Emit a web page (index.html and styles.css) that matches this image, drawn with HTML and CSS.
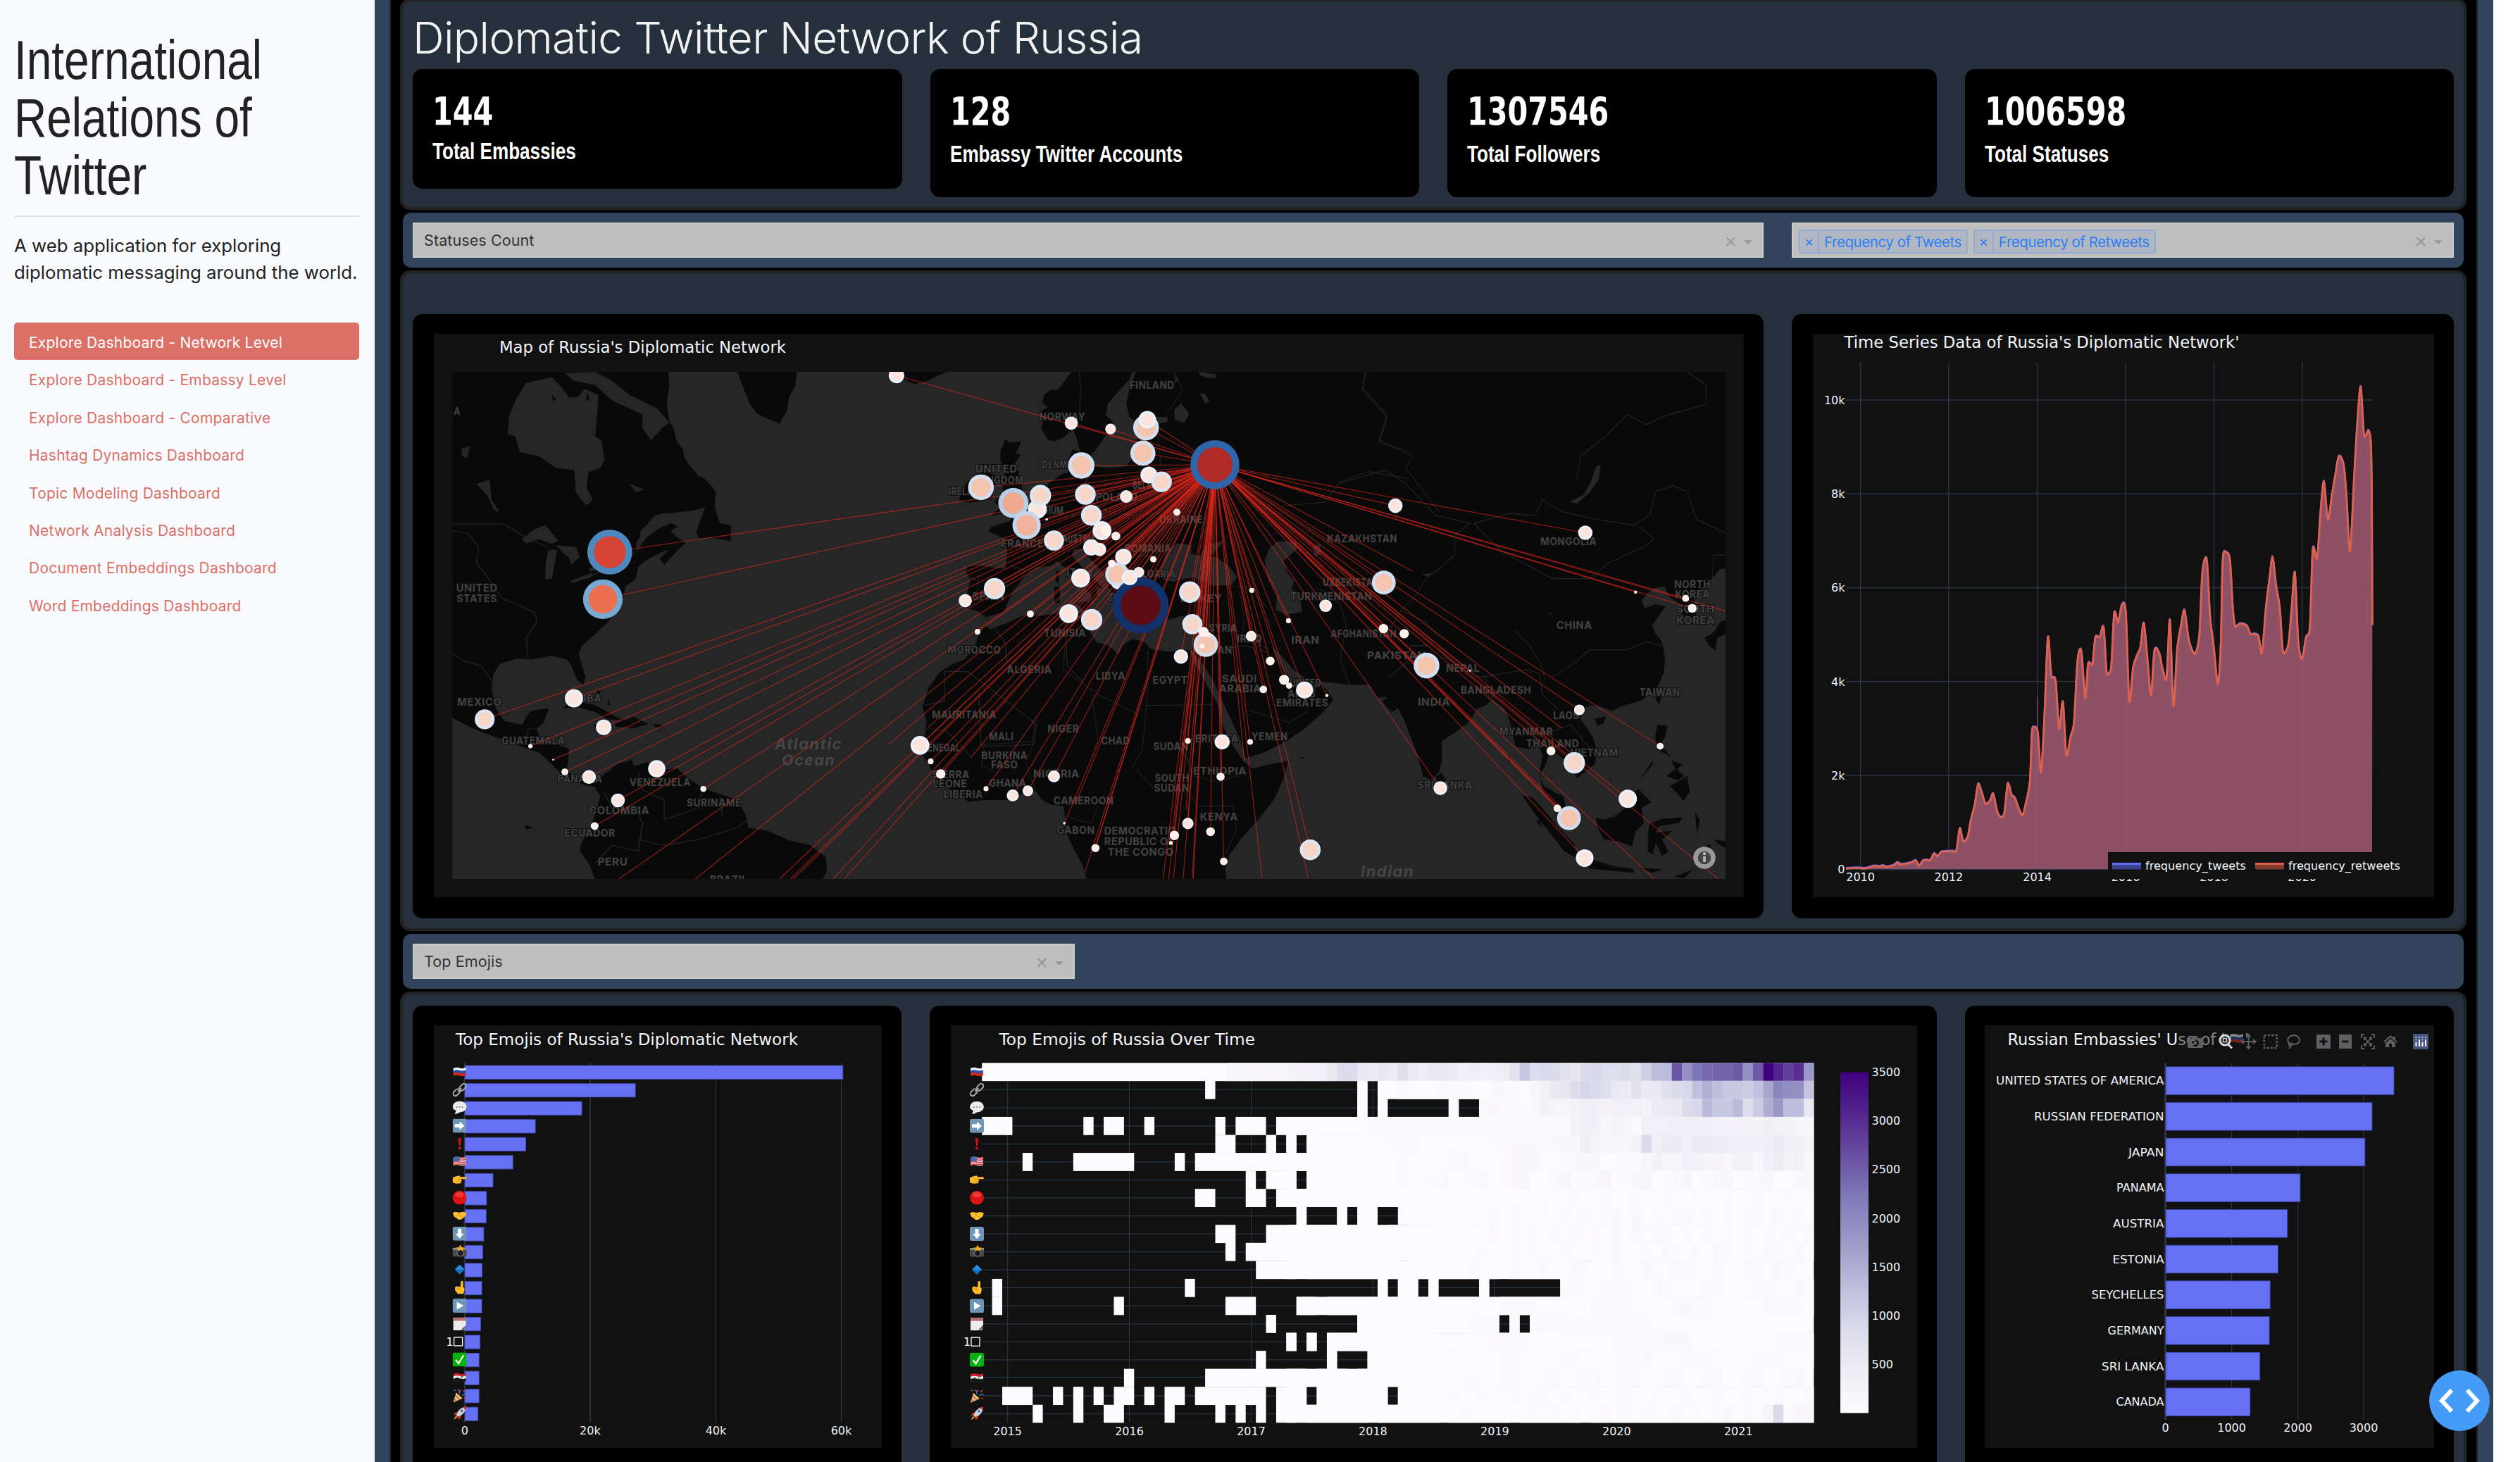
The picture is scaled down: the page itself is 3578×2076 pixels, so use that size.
FILE: index.html
```html
<!DOCTYPE html>
<html lang="en">
<head>
<meta charset="utf-8">
<title>International Relations of Twitter</title>
<link rel="stylesheet" href="styles.css">
</head>
<body>
<aside class="sidebar">
  <h2 class="brand">International<br>Relations of<br>Twitter</h2>
  <hr class="rule">
  <p class="lead">A web application for exploring<br>diplomatic messaging around the world.</p>
  <nav class="nav">
    <a class="nav-link active">Explore Dashboard - Network Level</a>
    <a class="nav-link">Explore Dashboard - Embassy Level</a>
    <a class="nav-link">Explore Dashboard - Comparative</a>
    <a class="nav-link">Hashtag Dynamics Dashboard</a>
    <a class="nav-link">Topic Modeling Dashboard</a>
    <a class="nav-link">Network Analysis Dashboard</a>
    <a class="nav-link">Document Embeddings Dashboard</a>
    <a class="nav-link">Word Embeddings Dashboard</a>
  </nav>
</aside>
<main class="main">
  <div class="board">
    <section class="panel panel-stats">
      <h1 class="title">Diplomatic Twitter Network of Russia</h1>
      <div class="stats">
        <div class="card stat stat-short"><b class="num">144</b><span class="label">Total Embassies</span></div>
        <div class="card stat"><b class="num">128</b><span class="label">Embassy Twitter Accounts</span></div>
        <div class="card stat"><b class="num">1307546</b><span class="label">Total Followers</span></div>
        <div class="card stat"><b class="num">1006598</b><span class="label">Total Statuses</span></div>
      </div>
    </section>

    <section class="filters">
      <div class="select wide"><span class="value">Statuses Count</span><span class="clear">×</span><i class="arrow"></i></div>
      <div class="select"><span class="tag"><i>×</i><span>Frequency of Tweets</span></span><span class="tag"><i>×</i><span>Frequency of Retweets</span></span><span class="clear">×</span><i class="arrow"></i></div>
    </section>

    <section class="panel panel-map">
      <div class="card chart wide"><svg id="map" viewBox="616 474 1860 800" width="1860" height="800"></svg></div>
      <div class="card chart"><svg id="series" viewBox="2574 474 882 800" width="882" height="800"></svg></div>
    </section>

    <section class="filters">
      <div class="select"><span class="value">Top Emojis</span><span class="clear">×</span><i class="arrow"></i></div>
    </section>

    <section class="panel panel-emoji">
      <div class="card chart"><svg id="emojis" viewBox="616 1456 636 600" width="636" height="600"></svg></div>
      <div class="card chart mid"><svg id="heat" viewBox="1350 1456 1372 600" width="1372" height="600"></svg></div>
      <div class="card chart third"><svg id="use" viewBox="2818 1456 638 600" width="638" height="600"></svg></div>
    </section>
  </div>
</main>
<button class="debug" aria-label="Debug"><svg viewBox="0 0 86 86" width="86" height="86"><path d="M32 28L18 43L32 58M54 28L68 43L54 58" fill="none" stroke="#fff" stroke-width="6"/></svg></button>

<svg width="0" height="0" class="defs">
  <defs>
    <symbol id="e-ru" viewBox="0 0 20 20"><path d="M1 5Q6 3 10 4.500T19 4V8Q14 9 10 8.500T1 9Z" fill="#f4f4f4"/><path d="M1 8.500Q6 6.500 10 8T19 7.500V12Q14 13 10 12T1 12.500Z" fill="#2455b5"/><path d="M1 12Q6 10 10 11.500T19 11.500V15Q14 17 10 15.500T1 16Z" fill="#d8281e"/></symbol>
    <symbol id="e-link" viewBox="0 0 20 20"><g fill="none" stroke="#a5a8ab" stroke-width="2"><rect x="9" y="3" width="11" height="6.500" rx="3.200" transform="rotate(-45 14.500 6.300)"/><rect x="0" y="10.500" width="11" height="6.500" rx="3.200" transform="rotate(-45 5.500 13.700)"/><path d="M7.500 12.500L12.500 7.500"/></g></symbol>
    <symbol id="e-talk" viewBox="0 0 20 20"><path d="M3 19L5 14Q0 12 0 8.500Q1 1 10 .800Q19 1 20 8.500Q19 16 10 16.500Q7 18.500 3 19Z" fill="#ececec"/><g fill="#777"><circle cx="6" cy="9" r="1"/><circle cx="10" cy="9" r="1"/><circle cx="14" cy="9" r="1"/></g></symbol>
    <symbol id="e-right" viewBox="0 0 20 20"><rect width="20" height="20" rx="3" fill="#6f95b8"/><path d="M3 7.500H10V4L17 10L10 16V12.500H3Z" fill="#fff"/></symbol>
    <symbol id="e-bang" viewBox="0 0 20 20"><path d="M8 2H12L11 13H9Z" fill="#e01010"/><circle cx="10" cy="16.300" r="1.900" fill="#e01010"/></symbol>
    <symbol id="e-us" viewBox="0 0 20 20"><path d="M1 4Q6 2 10 3.500T19 3V15Q14 16.500 10 15T1 15.500Z" fill="#e8c8ca"/><path d="M1 7.500Q6 5.500 10 7T19 6.500M1 11Q6 9 10 10.500T19 10M1 14.300Q6 12.500 10 13.500T19 13.500M10 4.500Q14 5 19 4" fill="none" stroke="#d2444c" stroke-width="1.500"/><path d="M1 4Q6 2 10 3.500V9.500Q6 8.500 1 10Z" fill="#3f6cb0"/></symbol>
    <symbol id="e-point" viewBox="0 0 20 20"><path d="M0 7L5 5L10 4L11 6H19Q21 7.500 19 9H12L13 11L11.500 15L5 15.500L0 14Z" fill="#fdbb2c"/><path d="M6 9H11M6 12H12" stroke="#d98d14" fill="none"/></symbol>
    <symbol id="e-red" viewBox="0 0 20 20"><circle cx="10" cy="10" r="9.900" fill="#d81414"/><ellipse cx="10" cy="5.500" rx="6" ry="4" fill="#ee3a34"/></symbol>
    <symbol id="e-shake" viewBox="0 0 20 20"><path d="M0 6L4 4.500L9 5.500L15 4.500L20 6L18 11L12 15.500L8 15.500L2 11Z" fill="#fdc130"/><path d="M9 6L8 9L14 12M5 12L8 14" stroke="#d08a10" fill="none"/></symbol>
    <symbol id="e-down" viewBox="0 0 20 20"><rect width="20" height="20" rx="3" fill="#6f95b8"/><path d="M7.500 3V10H4L10 17L16 10H12.500V3Z" fill="#fff"/></symbol>
    <symbol id="e-cam" viewBox="0 0 20 20"><rect y="4.500" width="20" height="12.500" rx="1" fill="#494949"/><rect y="4.500" width="20" height="3" fill="#8c8c86"/><circle cx="11" cy="12" r="4.500" fill="#1c1c1c" stroke="#888"/><path d="M11 0L13 4L17 4L14 6.500L15 9L11 7.500L7 9L8 6.500L5 4L9 4Z" fill="#f8a61c"/></symbol>
    <symbol id="e-dia" viewBox="0 0 20 20"><path d="M10 3L17 10L10 17L3 10Z" fill="#0f6fc6"/><path d="M10 3L17 10H3Z" fill="#2a8ce2"/></symbol>
    <symbol id="e-up" viewBox="0 0 20 20"><path d="M11.500 1.500Q13.500 -.5 15 1.500V9L17 12L15.500 19H7.500L3.500 14V9.500L6 8L8.500 9L11.500 8.500Z" fill="#fdbb2c"/><path d="M7 10V13M10 11V14" stroke="#d08a10"/></symbol>
    <symbol id="e-play" viewBox="0 0 20 20"><rect width="20" height="20" rx="3" fill="#6f95b8"/><path d="M6 4.500L15.500 10L6 15.500Z" fill="#fff"/></symbol>
    <symbol id="e-cal" viewBox="0 0 20 20"><path d="M1 2H19V12L12 19.500H1Z" fill="#eceaea"/><path d="M19 12L18 19.500H12Q17 17 19 12Z" fill="#8a8a8a"/><path d="M1 2H19V6H1Z" fill="#b9706c"/><path d="M2 1V3M5 1V3M8 1V3M11 1V3M14 1V3M17 1V3" stroke="#999"/></symbol>
    <symbol id="e-ok" viewBox="0 0 20 20"><rect width="20" height="20" rx="3" fill="#05b40a"/><path d="M4.500 10.500L8.500 15.500L15.500 4" fill="none" stroke="#fff" stroke-width="2.300"/></symbol>
    <symbol id="e-sy" viewBox="0 0 20 20"><path d="M1 5Q6 3 10 4.500T19 4V8Q14 9 10 8.500T1 9Z" fill="#c9202c"/><path d="M1 8.500Q6 6.500 10 8T19 7.500V12Q14 13 10 12T1 12.500Z" fill="#eee"/><path d="M1 12Q6 10 10 11.500T19 11.500V15Q14 17 10 15.500T1 16Z" fill="#111" stroke="#444" stroke-width=".5"/><circle cx="7" cy="10" r="1" fill="#187a3c"/><circle cx="13" cy="10.300" r="1" fill="#187a3c"/></symbol>
    <symbol id="e-party" viewBox="0 0 20 20"><path d="M1 20L5 6L14 14Z" fill="#f7c548"/><path d="M4 10L10 16M2.500 15L5.500 18" stroke="#a55ac0" stroke-width="1.600"/><path d="M10 8Q9 4 12 2M13 10Q16 8 20 8M2 2L5 3" stroke="#3f7be0" fill="none" stroke-width="1.400"/><path d="M15 3L17 5M16 13L19 14M8 1L9 4M18 2V3" stroke="#d6403a" stroke-width="1.600"/></symbol>
    <symbol id="e-rocket" viewBox="0 0 20 20"><path d="M19 0Q12 1 7 8L5 12L8 15L12 13Q19 8 19 0Z" fill="#cdd3d9"/><path d="M19 0Q16 0 14.500 1.300L18 5Q19 3 19 0Z" fill="#d2281c"/><circle cx="13" cy="6.500" r="1.800" fill="#2d6ca4"/><path d="M7 8L3 9L2 13L5 12ZM12 13L11.500 17L8 19V15Z" fill="#d2281c"/><path d="M5 13L1 19L7 15.500Z" fill="#fb9a1c"/></symbol>
  </defs>
</svg>
<script src="charts.js"></script>
</body>
</html>
```
FILE: styles.css
```css
* { box-sizing: border-box; }
html, body { margin: 0; height: 2076px; overflow: hidden; }
body { display: flex; background: #fff; font-family: Inter, "Liberation Sans", sans-serif; color: #222; }

.sidebar { width: 532px; flex: none; height: 2076px; padding: 44px 22px 0 20px; background: #f8fafd; }
.brand { margin: 0; font: 400 78px/82px "Liberation Sans", sans-serif; transform: scaleX(.82); transform-origin: 0 0; white-space: nowrap; color: #222; }
.rule { margin: 16px 0 0; border: 0; height: 2px; background: #dfe0e3; }
.lead { margin: 22px 0 0; font-size: 25.800px; line-height: 38px; white-space: nowrap; color: #222; }
.nav { margin-top: 52px; display: flex; flex-direction: column; }
.nav-link { height: 53.400px; padding-left: 21px; line-height: 58px; font-size: 21px; letter-spacing: .22px; color: #dc7067; white-space: nowrap; }
.nav-link.active { background: #dc7067; color: #fff; border-radius: 5px; }

.main { width: 3008px; flex: none; height: 2076px; padding: 0 22px 0 21px; background: #32445c; }
.board { height: 2076px; overflow: hidden; background: #000; border: solid #222; border-width: 0 2px; padding: 0 14px 0 13px; display: flex; flex-direction: column; gap: 4px; }
.panel { flex: none; background: #26303c; border: 4px solid #222; border-radius: 14px; padding: 0 14px; }
.panel-stats { height: 300px; margin-top: -2px; }
.title { margin: 0; padding-top: 8px; height: 96px; font: 300 62px/88px Inter, sans-serif; color: #f2f2f2; white-space: nowrap; letter-spacing: -.6px; }
.stats { display: grid; grid-template-columns: repeat(4, 1fr); gap: 40px; align-items: start; }
.card { background: #000; border-radius: 14px; }
.stat { height: 182px; padding: 26px 28px 0; color: #fff; display: flex; flex-direction: column; align-items: flex-start; }
.stat-short { height: 170px; }
.num { font: 700 56px/68px "DejaVu Sans Condensed", "DejaVu Sans", sans-serif; transform: scaleX(.82); transform-origin: 0 0; }
.label { font: 700 33px/40px "Liberation Sans", sans-serif; transform: scaleX(.79); transform-origin: 0 0; white-space: nowrap; margin-top: 7px; }
.stat-short .label { margin-top: 3px; }

.filters { flex: none; height: 78px; margin: 0 4px; padding: 14px; background: #32445c; border-radius: 12px; display: flex; gap: 40px; }
.select { width: 940px; height: 50px; background: #bebebe; border: 2px solid #ccc; display: flex; align-items: center; padding: 0 14px 0 8px; }
.select.wide { width: 1918px; }
.value { padding-left: 6px; font-size: 21.500px; color: #333; line-height: 44px; margin-top: 0; letter-spacing: .1px; }
.clear { margin-left: auto; padding-top: 4px; font: 30px/40px "Liberation Sans", sans-serif; color: #999; }
.arrow { margin: 5px 0 0 10px; border: solid transparent; border-width: 6px 6px 0; border-top-color: #999; }
.tag { height: 34px; margin: 4px 8px 0 0; display: flex; border: 2px solid #92abd6; border-radius: 3px; background: #b0b7c3; color: #2f7ff2; font-size: 20.500px; line-height: 30px; white-space: nowrap; }
.tag i { font-style: normal; width: 27px; text-align: center; border-right: 2px solid #92abd6; }
.tag span { padding: 1px 7px 0; letter-spacing: -.45px; }

.panel-map { height: 938px; padding-top: 58px; display: flex; gap: 40px; align-items: flex-start; }
.chart { flex: none; width: 940px; height: 858px; padding: 28px 0 0 30px; }
.chart.wide { width: 1918px; }
.chart svg { display: block; background: #111; }
.panel-emoji { height: 800px; padding-top: 16px; display: flex; gap: 40px; }
.panel-emoji .chart { width: 694px; height: 760px; }
.panel-emoji .mid { width: 1430px; }
.panel-emoji .third { padding-left: 28px; }
.chart text { font-family: "DejaVu Sans", Verdana, sans-serif; fill: #f2f5fa; }
.chart .place { font-family: Inter, "Open Sans", sans-serif; font-weight: 700; font-size: 14px; fill: #424242; stroke: #0d0d0d; stroke-width: 2px; paint-order: stroke; letter-spacing: .6px; }
.chart .ocean { font-style: italic; font-size: 22px; fill: #454545; stroke: none; letter-spacing: 1.500px; }
.debug { position: absolute; left: 3449px; top: 1946px; width: 86px; height: 86px; padding: 0; border: 0; border-radius: 50%; background: #459cf8; }
.debug svg { display: block; }
.defs { position: absolute; }
```
FILE: charts.js
```js
const NS = 'http://www.w3.org/2000/svg';
const byId = id => document.getElementById(id);
function el(parent, name, attrs, text) {
  const e = document.createElementNS(NS, name);
  for (const k in attrs) e.setAttribute(k, attrs[k]);
  if (text !== undefined) e.textContent = text;
  parent.appendChild(e);
  return e;
}
function label(p, x, y, str, size = 16, anchor = 'start', len, cls) {
  const a = { x, y, 'font-size': size, 'text-anchor': anchor };
  if (len) { a.textLength = len; a.lengthAdjust = 'spacingAndGlyphs'; }
  if (cls) a.class = cls;
  return el(p, 'text', a, str);
}
function rect(p, x, y, width, height, fill, more = {}) { return el(p, 'rect', { x, y, width, height, fill, ...more }); }
function line(p, x1, y1, x2, y2, stroke = '#283442', w = 1.5) { return el(p, 'line', { x1, y1, x2, y2, stroke, 'stroke-width': w }); }

/* Map tiles: west, centre, east. Each has its own origin and scale. */
const W = [600, 440, 1.6333, 1.7818], C = [1300, 500, 2.24, 2.0632], E = [1900, 440, 2.24, 1.7818];
const at = (t, x, y) => [t[0] + x / t[2], t[1] + y / t[3]];
const MATRIX = t => `translate(${t[0]} ${t[1]}) scale(${1 / t[2]} ${1 / t[3]})`;

function drawMap() {
  const svg = byId('map');
  label(svg, 709, 500.5, "Map of Russia's Diplomatic Network", 22.5, 'start', 407);
  const clip = el(svg, 'clipPath', { id: 'mapclip' });
  rect(clip, 642, 528, 1808, 720, '#000');
  const g = el(svg, 'g', { 'clip-path': 'url(#mapclip)' });
  rect(g, 642, 528, 1808, 720, '#262626');
  const LAND = '#090909', SEA = '#262626';
  const shape = (t, d, fill) => el(g, 'path', { d, fill, transform: MATRIX(t) });
  const border = (t, d) => el(g, 'path', { d, fill: 'none', stroke: '#222', 'stroke-width': 2.4, 'stroke-linejoin': 'round', transform: MATRIX(t) });

  shape(W, 'M69,157L570,157 572,190 566,240 572,280 582,300 590,335 603,350 608,375 620,395 640,420 652,425 665,440 680,460 678,490 640,505 600,512 560,515 535,530 515,555 495,590 497,610 520,575 545,555 575,540 592,548 575,560 590,575 610,590 595,605 560,645 550,630 572,605 545,618 520,632 500,650 495,680 470,700 465,730 440,775 425,795 400,820 370,850 362,870 370,900 378,930 372,950 358,935 345,900 335,885 300,875 250,885 220,882 180,895 165,920 160,960 170,1010 190,1040 230,1050 250,1015 293,1008 280,1045 265,1060 275,1095 310,1100 340,1110 335,1160 350,1185 390,1190 405,1185 410,1210 370,1200 330,1185 300,1150 270,1120 230,1105 180,1085 130,1065 100,1050 69,1032Z', LAND);
  shape(W, 'M215,230L240,185 300,170 325,200 340,222 360,220 375,200 408,215 405,260 400,320 415,330 422,380 412,400 385,410 380,450 395,480 380,495 368,480 355,460 352,405 310,400 270,370 225,360 215,320 197,315 200,270ZM330,160L352,180 400,190 440,230 510,265 510,300 530,330 555,300 572,285 545,250 480,215 440,180 400,157ZM230,580L260,555 285,545 315,585 300,592 270,580 240,590ZM292,607L312,607 300,680 285,682 285,640ZM310,595L355,600 365,625 345,645 338,625 325,615ZM340,687L375,672 395,665 390,677 350,690ZM385,655L420,640 415,655 390,662ZM125,440L155,430 160,480 178,512 165,505 150,470ZM90,350L110,345 103,375 92,370ZM480,440L515,455 495,462ZM505,560L540,520 560,515 530,545 500,600Z', SEA);
  shape(W, 'M635,560L655,500 675,478 680,510 690,540 715,545 715,585 690,580 665,575 640,578ZM730,157L868,157 865,190 850,220 845,255 828,288 800,275 775,262 760,240 745,200ZM1110,157L1215,157 1170,180 1140,188 1115,175ZM325,1008L350,988 400,1000 450,1030 475,1040 430,1036 400,1018 360,1005ZM445,1048L490,1030 525,1048 490,1058 450,1055ZM536,1048L558,1050 552,1058 538,1055ZM397,1048L412,1052 400,1056ZM405,960L412,968 406,975ZM430,985L436,1000 430,1000ZM238,1303L256,1310 240,1315ZM400,1210L410,1185 430,1168 450,1150 485,1138 490,1155 520,1145 545,1165 590,1160 615,1185 650,1210 690,1225 730,1240 750,1280 755,1310 800,1318 850,1342 900,1355 935,1385 938,1420 925,1445 402,1445 385,1400 365,1370 368,1350 390,1310 405,1260 412,1230Z', LAND);
  shape(W, 'M350,225L375,175 360,215ZM300,215L310,225 303,232ZM380,210L388,225 380,232Z', LAND);

  shape(C, 'M495,57L470,90 450,112 430,110 410,125 402,150 420,160 398,175 405,195 400,225 420,255 440,262 470,250 500,225 515,260 525,300 548,310 570,290 600,250 625,230 628,205 605,185 612,150 650,110 680,80 690,57ZM285,255L300,265 335,262 325,285 318,295 335,300 310,335 325,345 335,385 345,420 350,460 300,470 240,478 270,455 250,440 280,410 268,370 290,350 270,320 270,290ZM160,385L190,360 220,348 262,365 250,400 240,430 170,442 138,432Z', LAND);
  shape(C, 'M700,57L680,110 670,150 680,190 700,205 760,190 800,190 803,205 735,215 700,235 705,265 685,285 690,310 670,335 610,340 570,335 550,350 530,340 515,320 530,295 500,285 485,315 490,350 460,360 430,380 400,400 380,440 350,460 320,470 300,495 240,512 232,525 280,545 292,580 285,635 200,625 165,628 158,640 175,670 165,700 162,750 200,760 220,778 280,762 310,700 340,665 380,632 430,625 450,612 480,635 520,680 560,710 555,735 578,718 575,690 595,690 540,640 500,600 502,580 530,575 560,610 600,650 615,690 640,725 675,745 690,720 670,690 720,668 750,678 735,700 740,740 760,775 800,785 850,772 882,788 885,840 875,878 897,895 915,915 950,970 975,1020 1000,1070 1030,1130 1050,1190 1110,1172 1180,1140 1240,1100 1290,1060 1328,1020 1315,1000 1290,970 1255,1000 1215,990 1185,950 1150,905 1135,865 1160,885 1200,930 1250,962 1290,965 1380,975 1450,975 1480,1000 1530,1035 1555,1080 1580,1120 1580,57Z', LAND);
  shape(C, 'M0,1150L30,1120 35,1080 22,1040 40,985 75,940 115,915 155,900 185,870 200,830 220,800 240,812 300,790 340,772 400,772 470,762 530,765 545,780 548,810 575,850 610,858 645,885 660,858 690,840 730,850 745,868 800,878 870,872 885,905 920,965 960,1030 975,1090 1000,1140 1040,1195 1070,1220 1140,1205 1185,1198 1170,1250 1140,1310 1090,1370 1040,1420 1000,1470 985,1510 988,1550 545,1550 530,1500 500,1450 475,1400 478,1380 470,1330 430,1325 400,1310 380,1285 350,1290 290,1312 220,1312 170,1318 130,1295 70,1255 40,1205ZM508,735L560,730 548,765ZM440,688L460,688 458,735 442,735ZM447,640L458,640 455,678 446,672ZM842,800L870,795 858,808ZM1222,1186L1236,1188 1230,1193ZM690,795L720,800 700,804Z', LAND);
  shape(C, 'M775,650L795,590 830,560 880,565 875,590 915,600 955,600 1000,630 1022,660 1005,682 950,685 880,660 820,672 790,668ZM905,598L925,565 980,553 960,575 930,605ZM1110,610L1125,575 1150,555 1210,555 1215,575 1170,612 1185,650 1205,670 1195,695 1220,705 1230,760 1180,770 1145,755 1150,712 1120,660ZM822,168L845,150 870,180 855,208 825,198ZM905,122L920,120 935,145 920,150ZM900,57L955,65 955,76 925,75 905,68ZM825,60L835,80 825,95ZM1265,570L1285,560 1290,590 1270,600Z', SEA);

  shape(E, 'M100,157L1232,157 1232,655 1215,655 1190,680 1160,700 1130,730 1145,765 1130,778 1095,772 1090,745 1060,730 1045,715 1040,700 1000,705 965,735 975,755 1010,745 1042,750 998,798 1010,820 1030,840 1040,880 1035,920 1010,962 960,990 900,1003 870,1015 840,1005 805,1000 780,1010 770,1035 810,1080 825,1120 815,1150 760,1185 748,1165 720,1140 700,1125 672,1115 660,1150 640,1180 655,1205 690,1222 715,1230 730,1275 720,1282 690,1250 650,1215 640,1170 650,1130 632,1080 610,1112 565,1105 545,1040 530,1010 490,985 470,1000 440,1010 420,1040 370,1070 330,1092 330,1140 320,1170 295,1190 270,1180 250,1120 220,1060 205,1000 170,1018 138,990 175,975 125,982 100,950ZM312,1180L330,1172 350,1200 335,1225 315,1215ZM585,1228L620,1235 660,1270 700,1310 750,1350 762,1388 720,1370 680,1330 640,1290 610,1258ZM760,1392L810,1392 880,1408 940,1415 940,1424 800,1414ZM960,1412L1035,1415 1000,1424ZM820,1285L850,1290 900,1270 940,1220 955,1213 995,1245 965,1260 972,1300 945,1320 935,1357 890,1345 845,1340 825,1310ZM990,1300L1030,1288 1094,1284 1085,1298 1020,1306 1010,1322 1062,1318 1030,1340 1050,1370 1030,1382 1010,1348 1000,1378 985,1370 985,1330ZM1015,1050L1048,1052 1040,1080 1025,1100 1060,1132 1015,1112 1008,1080ZM1055,1205L1110,1180 1118,1220 1098,1242 1072,1218ZM1060,1140L1095,1150 1075,1165ZM1075,1160L1100,1180 1080,1190 1045,1180ZM1000,1140L960,1190 1000,1150ZM1022,960L1035,965 1020,998 1010,985ZM815,1035L852,1028 845,1045 825,1053ZM1165,830L1195,815 1215,790 1232,785 1232,820 1205,830 1200,862 1180,850ZM1135,1270L1150,1290 1142,1330 1138,1300ZM1150,1362L1185,1352 1185,1368ZM1195,1340L1232,1345 1232,1362 1210,1352ZM1070,1435L1130,1415 1100,1438ZM640,1290L650,1310 630,1295ZM545,1120L548,1145 540,1140Z', LAND);
  shape(E, 'M733,487L780,468 800,440 822,395 835,393 828,430 800,462 760,490ZM665,765L680,768 672,772ZM265,670L300,665 285,675Z', SEA);

  border(W, 'M69,542L190,542 230,570 290,600M69,558L105,565 130,600 125,640 160,690 185,730 260,765 265,790 240,830 245,890M69,870L100,890 135,900 165,945M380,680L430,650 470,640 495,610M240,1095L245,1060 280,1060M420,1220L440,1260 500,1275 510,1300 500,1370 440,1355 400,1400M500,1170L510,1215 560,1240 560,1290 600,1275 640,1260 645,1225M500,1340L560,1355 640,1340 730,1310 755,1290M690,1230L695,1280M1165,1000L1210,990 1210,915 1265,915M1265,915L1420,1045 1415,1100 1295,1105 1290,970M1300,770L1350,840 1355,890M1490,790L1495,900 1530,940');
  border(C, 'M520,57L525,110 520,200M820,57L850,110 800,180M740,870L735,1035 940,1033M715,1065L580,1003 470,930 475,860M735,1035L720,1170 690,1215M385,1080L380,1140 215,1150M560,1003L580,1130 570,1160M700,1220L760,1280 870,1290 900,1330M880,1130L860,1170 880,1240 960,1260 1060,1230M900,1330L1010,1330 1020,1400 985,1470M480,1355L510,1370 560,1380 580,1330M1430,57L1420,110 1500,190 1475,265 1568,290M1170,450L1300,440 1350,380 1440,350 1568,370M1030,700L1045,780 1040,830 1120,870M895,880L950,870 1050,860 1120,880M1060,1050L1190,1085 1250,1050M1270,690L1300,700 1350,740 1370,800 1350,900 1380,975M1000,685L1060,690 1120,750M700,240L770,245 780,330M560,440L620,470 700,480 780,470M500,580L530,560 600,560M300,625L370,645M170,660L200,670 190,740M400,400L430,470 420,540M540,350L550,440 500,480M640,590L760,600M840,1160L870,1200M215,1150L210,1210 250,1230M380,1140L350,1200 380,1280M0,1100L100,1110 180,1190');
  border(E, 'M87,157L80,200 155,265 130,330 235,370 215,400 320,510M0,440L150,405 215,440 310,520 420,540M430,540L545,515 625,520 650,480 710,510 820,530 940,545 990,520 1010,460 1065,445 1110,460 1140,530 1232,565M430,540L520,610 680,680 800,680 860,640 970,600 1005,580 960,550M420,540L370,570 370,620 330,650 280,680 250,720 200,760 280,790 320,830M320,850L340,880 450,930 600,910 640,920 650,975 700,1010M680,930L740,900 800,860 920,860 980,840 1035,850M560,810L610,850 640,890 660,940M100,820L170,800 200,760M160,930L220,890 230,850 290,850M1110,157L1170,190 1170,240 1050,265 980,290 920,265 850,320 770,370 760,430M640,1080L700,1060 740,1050 820,1130M1190,680L1195,620 1232,620M830,1288L880,1282 940,1240M470,930L480,985 520,960');

  const place = (t, x, y, str, w, cls) => { const [px, py] = at(t, x, y); label(g, px, py, str, cls ? 21 : 13.5, 'middle', w, 'place ' + (cls || '')); };
  [[80,266,'A',10],[126,713,'UNITED',59],[126,740,'STATES',58],[132,1002,'MEXICO',63],[380,993,'CUBA',44],[257,1100,'GUATEMALA',90],[365,1196,'PANAMA',64],[551,1205,'VENEZUELA',87],[456,1275,'COLOMBIA',86],[676,1257,'SURINAME',78],[388,1332,'ECUADOR',72],[441,1406,'PERU',43],[710,1450,'BRAZIL',54]].forEach(a => place(W, ...a));
  [[752,107,'FINLAND',64],[467,200,'NORWAY',66],[470,341,'DENMARK',60],[257,353,'UNITED',60],[270,386,'KINGDOM',66],[165,418,'IRELAND',54],[415,475,'BELGIUM',50],[340,572,'FRANCE',60],[520,557,'AUSTRIA',48],[640,436,'POLAND',60],[745,400,'BELARUS',48],[845,502,'UKRAINE',62],[740,585,'ROMANIA',66],[525,656,'ITALY',40],[755,660,'BULGARIA',66],[232,727,'SPAIN',46],[655,730,'GREECE',40],[905,733,'TURKEY',62],[475,834,'TUNISIA',60],[187,883,'MOROCCO',76],[362,941,'ALGERIA',64],[620,959,'LIBYA',42],[810,971,'EGYPT',50],[978,819,'SYRIA',40],[1062,850,'IRAQ',36],[940,883,'JORDAN',60],[1240,855,'IRAN',40],[1030,967,'SAUDI',50],[1032,997,'ARABIA',60],[1240,980,'UNITED',44],[1228,1010,'ARAB',40],[1230,1037,'EMIRATES',74],[155,1072,'MAURITANIA',92],[273,1136,'MALI',35],[470,1115,'NIGER',45],[636,1150,'CHAD',41],[812,1166,'SUDAN',50],[958,1143,'ERITREA',62],[1126,1136,'YEMEN',52],[82,1169,'SENEGAL',54],[283,1192,'BURKINA',66],[283,1220,'FASO',38],[448,1247,'NIGERIA',66],[113,1248,'SIERRA',53],[110,1276,'LEONE',49],[293,1272,'GHANA',53],[152,1306,'LIBERIA',56],[535,1325,'CAMEROON',86],[816,1259,'SOUTH',49],[815,1288,'SUDAN',50],[968,1237,'ETHIOPIA',76],[965,1373,'KENYA',54],[510,1411,'GABON',54],[714,1413,'DEMOCRATIC',102],[712,1444,'REPUBLIC OF',100],[716,1475,'THE CONGO',94],[1420,557,'KAZAKHSTAN',100],[1385,684,'UZBEKISTAN',80],[1322,726,'TURKMENISTAN',116],[1425,836,'AFGHANISTAN',94],[1530,899,'PAKISTAN',84]].forEach(a => place(C, ...a));
  [[630,157,'RUSSIA',62],[733,596,'MONGOLIA',80],[751,808,'CHINA',51],[1127,703,'NORTH',52],[1127,728,'KOREA',50],[1137,767,'SOUTH',54],[1137,794,'KOREA',55],[397,915,'NEPAL',48],[502,971,'BANGLADESH',100],[305,1002,'INDIA',46],[1023,977,'TAIWAN',58],[725,1036,'LAOS',37],[598,1076,'MYANMAR',76],[682,1107,'THAILAND',75],[815,1130,'VIETNAM',68],[340,1211,'SRI LANKA',78]].forEach(a => place(E, ...a));
  place(W, 895, 1112, 'Atlantic', 96, 'ocean');
  place(W, 895, 1153, 'Ocean', 76, 'ocean');
  place(E, 157, 1434, 'Indian', 76, 'ocean');

  const pts = [];
  const add = (t, list) => list.forEach(([x, y, r, oc, ic, ir]) => { const p = at(t, x, y); pts.push([p[0], p[1], r / t[2], oc, ic, ir && ir / t[2]]); });
  add(W, [[434,613,52,'#4d88bf','#d44333',37],[418,732,46,'#77aad2','#eb7052',33],[1099,166,18],[351,983,21],[144,1036,23],[420,1056,18],[250,1104,5],[303,1138,2],[330,1169,8],[386,1182,16],[453,1241,16],[543,1161,20],[651,1212,7],[399,1306,9]]);
  add(C, [[495,208,21],[620,225,17],[733,221,41],[737,198,28],[723,296,40],[742,360,27],[782,380,33],[527,332,42],[208,396,41],[387,460,30],[397,420,34],[311,442,48,'#b5cfe6','#f0a98f',34],[353,507,45,'#c3d6ec','#f2b39c',33],[417,490,4],[540,417,33],[559,478,33],[593,523,30],[605,523,15],[670,423,20],[831,469,11],[637,539,14],[440,552,32],[559,572,26],[585,578,21],[661,600,26],[756,607,10],[525,662,30],[645,672,25],[641,651,38],[624,619,12],[716,742,89,'#12306a','#5c0c12',63],[710,645,17],[681,660,25],[251,693,34],[158,728,21],[365,767,11],[197,819,9],[487,766,30],[560,784,34],[872,703,34],[880,797,32],[923,857,39],[916,820,16],[932,828,8],[911,861,8],[844,892,23],[1069,698,8],[1067,832,17],[1186,787,8],[1304,743,20],[1489,675,38],[1488,810,15],[1554,825,15],[1128,905,14],[1106,988,12],[1172,960,16],[1188,977,10],[1237,990,27],[1308,1006,5],[1526,450,23],[14,1152,30],[48,1199,9],[80,1236,15],[224,1279,8],[309,1299,19],[357,1285,17],[440,1243,19],[473,1380,4],[572,1453,13],[866,1139,9],[975,1142,24],[1064,1142,9],[970,1244,13],[866,1381,18],[823,1416,15],[812,1438,6],[938,1405,14],[980,1492,12],[1255,1458,33]]);
  add(E, [[786,564,23],[946,714,5],[1105,730,11],[1126,755,14],[281,900,41],[419,913,3],[767,1012,17],[1024,1104,11],[677,1116,14],[751,1146,34],[921,1237,29],[325,1210,22],[697,1261,12],[734,1286,38],[784,1387,28]]);
  const ends = pts.map(p => [p[0], p[1]]);
  [[455,1440],[632,1440],[828,1440],[853,1440],[860,1440],[952,1440],[978,1440],[1080,1100],[1272,1132]].forEach(p => ends.push(at(W, ...p)));
  [[787,1542],[805,1542],[820,1542],[851,1542],[883,1542],[1102,1542],[1249,1542],[538,1525],[508,1325],[1046,1200],[575,1440],[40,1100],[880,1542],[860,1340]].forEach(p => ends.push(at(C, ...p)));
  [[1232,762],[1005,1440],[1209,1440],[236,661],[711,1058],[697,1250],[690,1255]].forEach(p => ends.push(at(E, ...p)));
  const [mx, my] = at(C, 952, 330);
  ends.forEach(([x, y]) => el(g, 'line', { x1: mx, y1: my, x2: x, y2: y, stroke: '#e0281c', 'stroke-opacity': .66, 'stroke-width': 1.1 }));
  pts.push([mx, my, 78 / 2.24, '#2f66ab', '#b02a26', 56 / 2.24]);
  pts.forEach(([cx, cy, r, oc, ic, ir]) => {
    let o = oc, i = ic;
    if (!o) [o, i] = r > 16.5 ? ['#d0deef', '#f4c4af'] : r > 13.5 ? ['#dbe7f5', '#f7d6c8'] : r > 7.5 ? ['#ecf2fb', '#fae4db'] : ['#fdf6f3', '#fdefe9'];
    el(g, 'circle', { cx, cy, r, fill: o });
    el(g, 'circle', { cx, cy, r: ir || r * .72, fill: i });
  });
  el(g, 'circle', { cx: 2420, cy: 1218, r: 12.5, fill: '#444', stroke: '#999', 'stroke-width': 6.5 });
  rect(g, 2418.2, 1216, 3.6, 8, '#bbb');
  rect(g, 2418.2, 1210.5, 3.6, 3.6, '#bbb');
}

function drawSeries() {
  const svg = byId('series');
  const S = [2500, 440, 1.4545, 1.7422];
  label(svg, 2618.5, 494, "Time Series Data of Russia's Diplomatic Network'", 22.5, 'start', 561);
  const xs = [2641.6, 2766.9, 2892.6, 3018, 3143.5, 3268.7];
  xs.forEach(x => line(svg, x, 514, x, 1234));
  ['0', '2k', '4k', '6k', '8k', '10k'].forEach((t, i) => {
    const y = 1234.3 - i * 133.25;
    line(svg, 2621, y, 3368, y, '#283442', i === 0 ? 3 : 1.5);
    label(svg, 2619.5, y + 5.8, t, 16, 'end');
  });
  const d = '176,1382 190,1381 205,1381 215,1382 235,1376 245,1377 252,1375 260,1378 275,1374 282,1367 290,1372 312,1367 320,1362 327,1375 335,1363 342,1361 350,1362 358,1345 365,1352 373,1341 380,1340 395,1339 404,1337 411,1283 418,1314 427,1305 434,1262 442,1224 449,1173 457,1196 464,1222 473,1215 480,1197 488,1240 495,1255 503,1245 510,1172 518,1200 525,1208 534,1238 541,1250 548,1218 556,1165 560,1045 565,1033 572,1045 579,1144 586,1000 593,810 600,904 609,918 616,1037 624,970 631,1101 640,1055 647,1020 654,870 662,844 670,961 676,876 685,876 691,810 700,810 708,785 714,895 719,899 724,880 730,750 738,773 746,729 754,750 761,968 769,885 777,855 784,835 791,775 799,870 806,954 813,843 823,850 830,890 838,910 845,767 852,979 860,840 868,780 875,743 883,810 890,840 898,850 906,800 912,650 921,618 928,760 936,840 944,926 950,830 954,620 961,600 969,620 975,740 980,783 990,776 1004,782 1011,802 1020,802 1028,808 1035,849 1043,740 1050,670 1057,611 1064,680 1072,740 1078,843 1084,845 1090,825 1096,745 1103,650 1110,820 1118,864 1126,810 1134,785 1140,592 1149,614 1156,500 1163,424 1171,518 1180,455 1187,405 1194,362 1204,385 1210,470 1217,597 1226,400 1232,280 1239,190 1246,310 1255,298 1260,330 1262,470 1263,780'
    .split(' ').map(s => at(S, ...s.split(',').map(Number)));
  let path = `M${d[0]}`;
  for (let i = 0; i < d.length - 1; i++) {
    const p0 = d[i - 1] || d[i], p1 = d[i], p2 = d[i + 1], p3 = d[i + 2] || p2;
    const k = 7;
    const clampY = v => Math.min(1234, v);
    path += `C${p1[0] + (p2[0] - p0[0]) / k},${clampY(p1[1] + (p2[1] - p0[1]) / k)} ${p2[0] - (p3[0] - p1[0]) / k},${clampY(p2[1] - (p3[1] - p1[1]) / k)} ${p2[0]},${p2[1]}`;
  }
  el(svg, 'path', { d: path + 'L3368,1234L2621,1234Z', fill: '#8e5064' });
  xs.slice(2).forEach(x => line(svg, x, x > 3200 ? 940 : 990, x, 1234, '#95567a', 1));
  el(svg, 'path', { d: path, fill: 'none', stroke: '#636efa', 'stroke-width': 2.5, transform: 'translate(0 -1)' });
  el(svg, 'path', { d: path, fill: 'none', stroke: '#e0614b', 'stroke-width': 2.8, 'stroke-linejoin': 'round' });
  ['2010', '2012', '2014', '2016', '2018', '2020'].forEach((t, i) => label(svg, xs[i], 1250.5, t, 16, 'middle'));
  rect(svg, 2993, 1210, 431, 38, '#111');
  rect(svg, 2999, 1226, 41, 8.5, '#3c428e'); rect(svg, 2999, 1225, 41, 3, '#636efa');
  rect(svg, 3202, 1226, 41, 8.5, '#813c2e'); rect(svg, 3202, 1225, 41, 3, '#e0614b');
  label(svg, 3046, 1235, 'frequency_tweets', 16, 'start', 143);
  label(svg, 3249, 1235, 'frequency_retweets', 16, 'start', 159);
}

const EMOJI = ['ru', 'link', 'talk', 'right', 'bang', 'us', 'point', 'red', 'shake', 'down', 'cam', 'dia', 'up', 'play', 'cal', null, 'ok', 'sy', 'party', 'rocket'];
function emojiAxis(svg, cx, first, pitch) {
  EMOJI.forEach((n, i) => {
    const y = first + i * pitch;
    if (n) el(svg, 'use', { href: '#e-' + n, x: cx - 10, y: y - 10, width: 20, height: 20 });
    else {
      label(svg, cx - 19, y + 6, '1', 16);
      rect(svg, cx - 8, y - 6, 12, 12, 'none', { stroke: '#f2f5fa', 'stroke-width': 1.4 });
    }
  });
}
function drawEmojis() {
  const svg = byId('emojis');
  label(svg, 647, 1483.5, "Top Emojis of Russia's Diplomatic Network", 22.5, 'start', 486);
  [659.8, 837.9, 1016.5, 1194.5].forEach((x, i) => {
    line(svg, x, 1509, x, 2020, '#283442', i < 2 ? 2 : 1.2);
    label(svg, x, 2037, ['0', '20k', '40k', '60k'][i], 16, 'middle');
  });
  [1314,706,549,413,385,347,289,270,269,262,259,257,256,256,253,251,248,248,248,245].forEach((v, i) =>
    rect(svg, 660, 1513 + i * 25.53, 560 + v / 2.0632 - 660, 19.4, '#6670f3', { stroke: '#3c449c', 'stroke-width': .8 }));
  emojiAxis(svg, 652.6, 1522, 25.53);
}

const PURPLES = [[252,251,253],[239,237,245],[218,218,235],[188,189,220],[158,154,200],[128,125,186],[106,81,163],[84,39,143],[63,0,125]];
function purple(v) {
  const f = Math.min(v / 3500, 1) * 8, i = Math.min(7, Math.floor(f)), k = f - i;
  return `rgb(${PURPLES[i].map((c, j) => Math.round(c + (PURPLES[i + 1][j] - c) * k))})`;
}
/* Months with data for each emoji row, as start-end column ranges. */
const FILLED = ['0-81','22 37 39-81','37 39 46 49-81','0-2 10 12-13 16 23 25-27 29-81','23-24 28 30 32-81','4 9-14 19 21-81','26 28-30 32-81','21-22 26-27 29-81','31 35 37-38 41-81','23-24 28-81','24 26-81','27-81','1 20 39 41-42 44 49 57-81','1 13 24-26 31-81','28 37-50 52 54-81','30 32 34-81','27 34 38-81','14 22-81','2-4 7 9 11 13-14 16 18-19 21-27 29-31 33-39 41-81','5 9 12-13 18 23 25 27 29-81'];
const VALUES = {
  0: [24, [120,120,150,180,180,200,260,280,300,330,550,820,860,550,480,600,480,760,520,450,550,560,480,350,430,350,400,450,700,1150,800,880,850,700,620,850,920,800,780,850,750,1050,1300,1320,2600,1900,2250,2400,2450,2450,2550,1900,2550,3500,3100,2800,3000,1800]],
  1: [54, [150,300,550,600,800,950,850,750,550,500,700,500,550,750,850,900,1250,1500,1300,1150,1150,1100,1250,1600,2050,1950,1900,1200]],
  2: [54, [100,250,200,200,250,400,350,250,350,350,300,250,500,500,550,850,900,1350,1150,1150,1350,800,1100,1500,1800,1300,1300,600]],
  3: [58, [320,380,340,170,230,180,60,330,350,340,370,370,340,400,300,280,270,270,260,360,320,250,200,150]],
  4: [59, [380,220,150,200,200,250,880,400,480,500,400,520,500,450,420,400,420,350,380,520,400,340,220]],
  5: [66, [300,180,180,300,340,210,210,120,310,310,170,340,480,260,340,160]],
  19: [77, [220,880,60,150,120]]
};
function drawHeat() {
  const svg = byId('heat'), x0 = 1394.2, y0 = 1509.3, cw = 14.405, rh = 25.55;
  label(svg, 1418.5, 1483.5, 'Top Emojis of Russia Over Time', 22.5, 'start', 363.5);
  for (let i = 0; i < 7; i++) {
    const x = 1430.6 + i * 172.95;
    line(svg, x, y0, x, 2020, '#283442', 1.2);
    label(svg, x, 2037.5, String(2015 + i), 16, 'middle');
  }
  for (let r = 0; r < 20; r++) line(svg, x0, y0 + rh * (r + .5), 2575, y0 + rh * (r + .5), '#283442', 1.3);
  FILLED.forEach((row, r) => row.split(' ').forEach(part => {
    const [a, b] = part.split('-').map(Number), end = b === undefined ? a : b;
    const last = r === 19 ? rh : rh + .3;
    rect(svg, x0 + a * cw, y0 + r * rh, (end - a + 1) * cw, last, '#fcfcff');
    for (let c = a; c <= end; c++) {
      const [start, vals] = VALUES[r] || [99, []];
      let v = vals[c - start];
      if (v === undefined) v = c < 30 ? 0 : ((c * 7 + r * 13 + (c * r) % 11) % 10) / 10 * (r < 7 ? 190 : 110) * Math.min(1, (c - 28) / 35);
      if (v > 0) rect(svg, x0 + c * cw, y0 + r * rh, c === end ? cw : cw + .3, last, purple(v));
    }
  }));
  emojiAxis(svg, 1387, 1522, 25.55);
  const grad = el(svg, 'linearGradient', { id: 'bar', x1: 0, y1: 1, x2: 0, y2: 0 });
  PURPLES.forEach((c, i) => el(grad, 'stop', { offset: i / 8, 'stop-color': `rgb(${c})` }));
  rect(svg, 2613, 1522.5, 40, 484, 'url(#bar)');
  for (let i = 0; i < 7; i++) label(svg, 2657.5, 1528 + i * 69.2, String(3500 - i * 500), 16);
}

function drawUse() {
  const svg = byId('use');
  label(svg, 2850.5, 1483.5, "Russian Embassies' Use of '", 22.5, 'start', 309);
  el(svg, 'use', { href: '#e-ru', x: 3165, y: 1464, width: 21, height: 21 });
  label(svg, 3187, 1483.5, "'", 22.5);
  rect(svg, 3091, 1462, 362, 34, '#111', { opacity: .5 });
  const g = el(svg, 'g', { fill: '#5f6063', stroke: 'none' });
  const icon = (x, d, more = {}) => el(g, 'path', { d, transform: `translate(${x - 10} 1469)`, ...more });
  const st = { fill: 'none', stroke: '#5f6063', 'stroke-width': 2 };
  icon(3117, 'M1 5H6L7 2H13L14 5H19Q21 5 21 7V17Q21 19 19 19H1Q-1 19 -1 17V7Q-1 5 1 5ZM10 7A5 5 0 1 0 10.100 7ZM10 9.500A2.500 2.500 0 1 1 9.900 9.500Z', { 'fill-rule': 'evenodd' });
  icon(3160, 'M9 1A7 7 0 1 0 9.100 1M13 13L19 19.500', { fill: 'none', stroke: '#d6d6d6', 'stroke-width': 3 });
  icon(3160, 'M6.500 5.500H11.500V10.500H6.500Z', { fill: 'none', stroke: '#d6d6d6', 'stroke-width': 1.500 });
  icon(3192.500, 'M10 0V20M0 10H20M7 3.500L10 0L13 3.500M7 16.500L10 20L13 16.500M3.500 7L0 10L3.500 13M16.500 7L20 10L16.500 13', st);
  icon(3223.700, 'M1 1H19V19H1Z', { ...st, 'stroke-width': 2.500, 'stroke-dasharray': '3 2.200' });
  icon(3256, 'M7 14Q0 10 3 5Q8 -1 15 2Q22 7 17 12Q13 15 8 13Q3 12 4 15Q7 18 9 13M6 17L4 20', st);
  icon(3299, 'M0 0H20V20H0ZM8.500 4.500V8.500H4.500V11.500H8.500V15.500H11.500V11.500H15.500V8.500H11.500V4.500Z', { 'fill-rule': 'evenodd' });
  icon(3330, 'M1 0H19V20H1ZM5.500 8.500V11.500H14.500V8.500Z', { 'fill-rule': 'evenodd' });
  icon(3362, 'M1 5V0H5M15 0H19V5M19 15V20H15M5 20H1V15M5 4.500L15 15.500M15 4.500L5 15.500M5 8V4.500H8M12 4.500H15V8M15 12V15.500H12M8 15.500H5V12', { ...st, 'stroke-width': 1.800 });
  icon(3394, 'M0 10L10 1L14 4.500V3H17V7.500L20 10L18.500 11.500L10 4L1.500 11.500ZM3 12L10 6L17 12V18H12V13H8V18H3Z');
  rect(svg, 3426, 1468, 22, 22, '#46557f');
  el(svg, 'path', { d: 'M3430.500 1480V1486M3435 1476V1486M3439.500 1480V1486M3444 1476V1486', stroke: '#fff', 'stroke-width': 2 });
  el(svg, 'path', { d: 'M3430.500 1472V1478M3435 1472V1474M3439.500 1472V1478M3444 1472V1474', stroke: '#a9c4d2', 'stroke-width': 2, 'stroke-dasharray': '2 1.500' });

  [3074.600, 3168.600, 3262.700, 3356].forEach((x, i) => {
    line(svg, x, 1509, x, 2016, '#283442', i ? 1.200 : 3);
    label(svg, x, 2033, ['0', '1000', '2000', '3000'][i], 16, 'middle');
  });
  const names = ['UNITED STATES OF AMERICA', 'RUSSIAN FEDERATION', 'JAPAN', 'PANAMA', 'AUSTRIA', 'ESTONIA', 'SEYCHELLES', 'GERMANY', 'SRI LANKA', 'CANADA'];
  const widths = [238.500, 184.500, 50.500, 67.500, 72.500, 73, 103, 80, 88.500, 68];
  [1233, 1175, 1156, 984, 950, 925, 904, 902, 877, 851].forEach((v, i) => {
    const y = 1514.800 + i * 50.680;
    rect(svg, 3075, y, 2740 + v / 1.871 - 3075, 39.600, '#6670f3', { stroke: '#3c449c', 'stroke-width': .8 });
    label(svg, 3072.500, y + 25.500, names[i], 16, 'end', widths[i]);
  });
}

drawMap(); drawSeries(); drawEmojis(); drawHeat(); drawUse();
```
